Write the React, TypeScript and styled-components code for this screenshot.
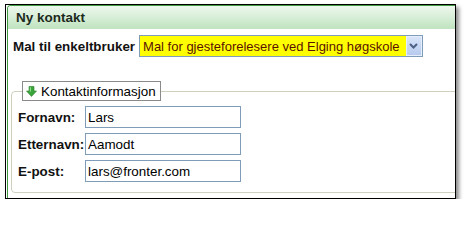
import React from "react"
import styled, { createGlobalStyle } from "styled-components"

const GlobalStyle = createGlobalStyle`
	html, body {
		margin: 0;
		padding: 0;
		background: #ffffff;
		font-family: "Liberation Sans", Arial, sans-serif;
	}
`

const fields = [
	{ label: "Fornavn:", value: "Lars" },
	{ label: "Etternavn:", value: "Aamodt" },
	{ label: "E-post:", value: "lars@fronter.com" },
]

const DownArrow: React.FC = () => (
	<ArrowIcon width="11" height="11" viewBox="0 0 11 11">
		<path d="M3 0.5 H8 V5 H10.5 L5.5 10.5 L0.5 5 H3 Z" fill="#3aa53a" stroke="#2a7d2a" strokeWidth="0.6" />
		<path d="M3.8 1.2 H5 V5.6 H3.8 Z" fill="#8fdc8f" />
	</ArrowIcon>
)

const App: React.FC = () => {
	return (
		<>
			<GlobalStyle />
			<Frame>
				<Panel>
					<Header>Ny kontakt</Header>
					<Body>
						<TemplateRow>
							<BoldLabel>Mal til enkeltbruker</BoldLabel>
							<Select>
								<SelectText>Mal for gjesteforelesere ved Elging høgskole</SelectText>
								<SelectButton>
									<svg width="9" height="6" viewBox="0 0 9 6">
										<path d="M1 1 L4.5 4.5 L8 1" fill="none" stroke="#4d6185" strokeWidth="2" />
									</svg>
								</SelectButton>
							</Select>
						</TemplateRow>
						<Fieldset>
							<Legend>
								<DownArrow />
								Kontaktinformasjon
							</Legend>
							<FieldList>
								{fields.map((f) => (
									<FieldRow key={f.label}>
										<FieldLabel>{f.label}</FieldLabel>
										<Input>{f.value}</Input>
									</FieldRow>
								))}
							</FieldList>
						</Fieldset>
					</Body>
				</Panel>
			</Frame>
		</>
	)
}

export default App

const Frame = styled.div`
	margin: 4px 0 0 5px;
	width: 451px;
	height: 195px;
	box-sizing: border-box;
	border: 1px solid #000;
	background: #fff;
	box-shadow: 3px 3px 4px rgba(0, 0, 0, 0.45);
	overflow: hidden;
	padding-left: 1px;
`

const Panel = styled.div`
	width: 470px;
	height: 220px;
	border-top: 1px solid #3f9a3f;
	border-left: 1px solid #3f9a3f;
	border-top-left-radius: 4px;
	background: #fff;
`

const Header = styled.div`
	height: 23px;
	padding-left: 8px;
	display: flex;
	align-items: center;
	font-size: 13.5px;
	font-weight: bold;
	color: #1d2a1d;
	background: linear-gradient(#eef8ee, #bfe3bf);
	border-top-left-radius: 3px;
`

const Body = styled.div`
	padding: 6px 0 0 5px;
`

const TemplateRow = styled.div`
	display: flex;
	align-items: center;
	gap: 4px;
`

const BoldLabel = styled.span`
	font-size: 13.4px;
	font-weight: bold;
	color: #111;
`

const Select = styled.div`
	display: flex;
	height: 22px;
	box-sizing: border-box;
	border: 1px solid #7f9db9;
	background: #fff;
`

const SelectText = styled.span`
	background: #ffff00;
	color: #5a1200;
	font-size: 13px;
	padding: 0 6px 0 3px;
	display: flex;
	align-items: center;
`

const SelectButton = styled.span`
	width: 16px;
	display: flex;
	align-items: center;
	justify-content: center;
	background: linear-gradient(#d8e4f8, #b7cbee);
	border: 1px solid #e6edfb;
	box-sizing: border-box;
`

const Fieldset = styled.fieldset`
	margin: 24px 0 0 -2px;
	padding: 0 6px 10px 6px;
	width: 480px;
	box-sizing: border-box;
	border: 1px solid #d0d0bf;
	border-radius: 4px;
	min-width: 0;
`

const Legend = styled.legend`
	margin-left: 4px;
	padding: 0 4px 0 3px;
	height: 20px;
	box-sizing: border-box;
	border: 1px solid #8a8a8a;
	display: flex;
	align-items: center;
	gap: 4px;
	font-size: 13.4px;
	color: #000;
	background: #fff;
`

const ArrowIcon = styled.svg`
	flex-shrink: 0;
`

const FieldList = styled.div`
	display: flex;
	flex-direction: column;
	gap: 5px;
	padding-top: 5px;
`

const FieldRow = styled.div`
	display: flex;
	align-items: center;
`

const FieldLabel = styled.span`
	width: 67px;
	font-size: 13.4px;
	font-weight: bold;
	color: #111;
`

const Input = styled.div`
	width: 156px;
	height: 22px;
	box-sizing: border-box;
	border: 1px solid #7f9db9;
	padding-left: 2px;
	display: flex;
	align-items: center;
	font-size: 13.4px;
	color: #000;
`
